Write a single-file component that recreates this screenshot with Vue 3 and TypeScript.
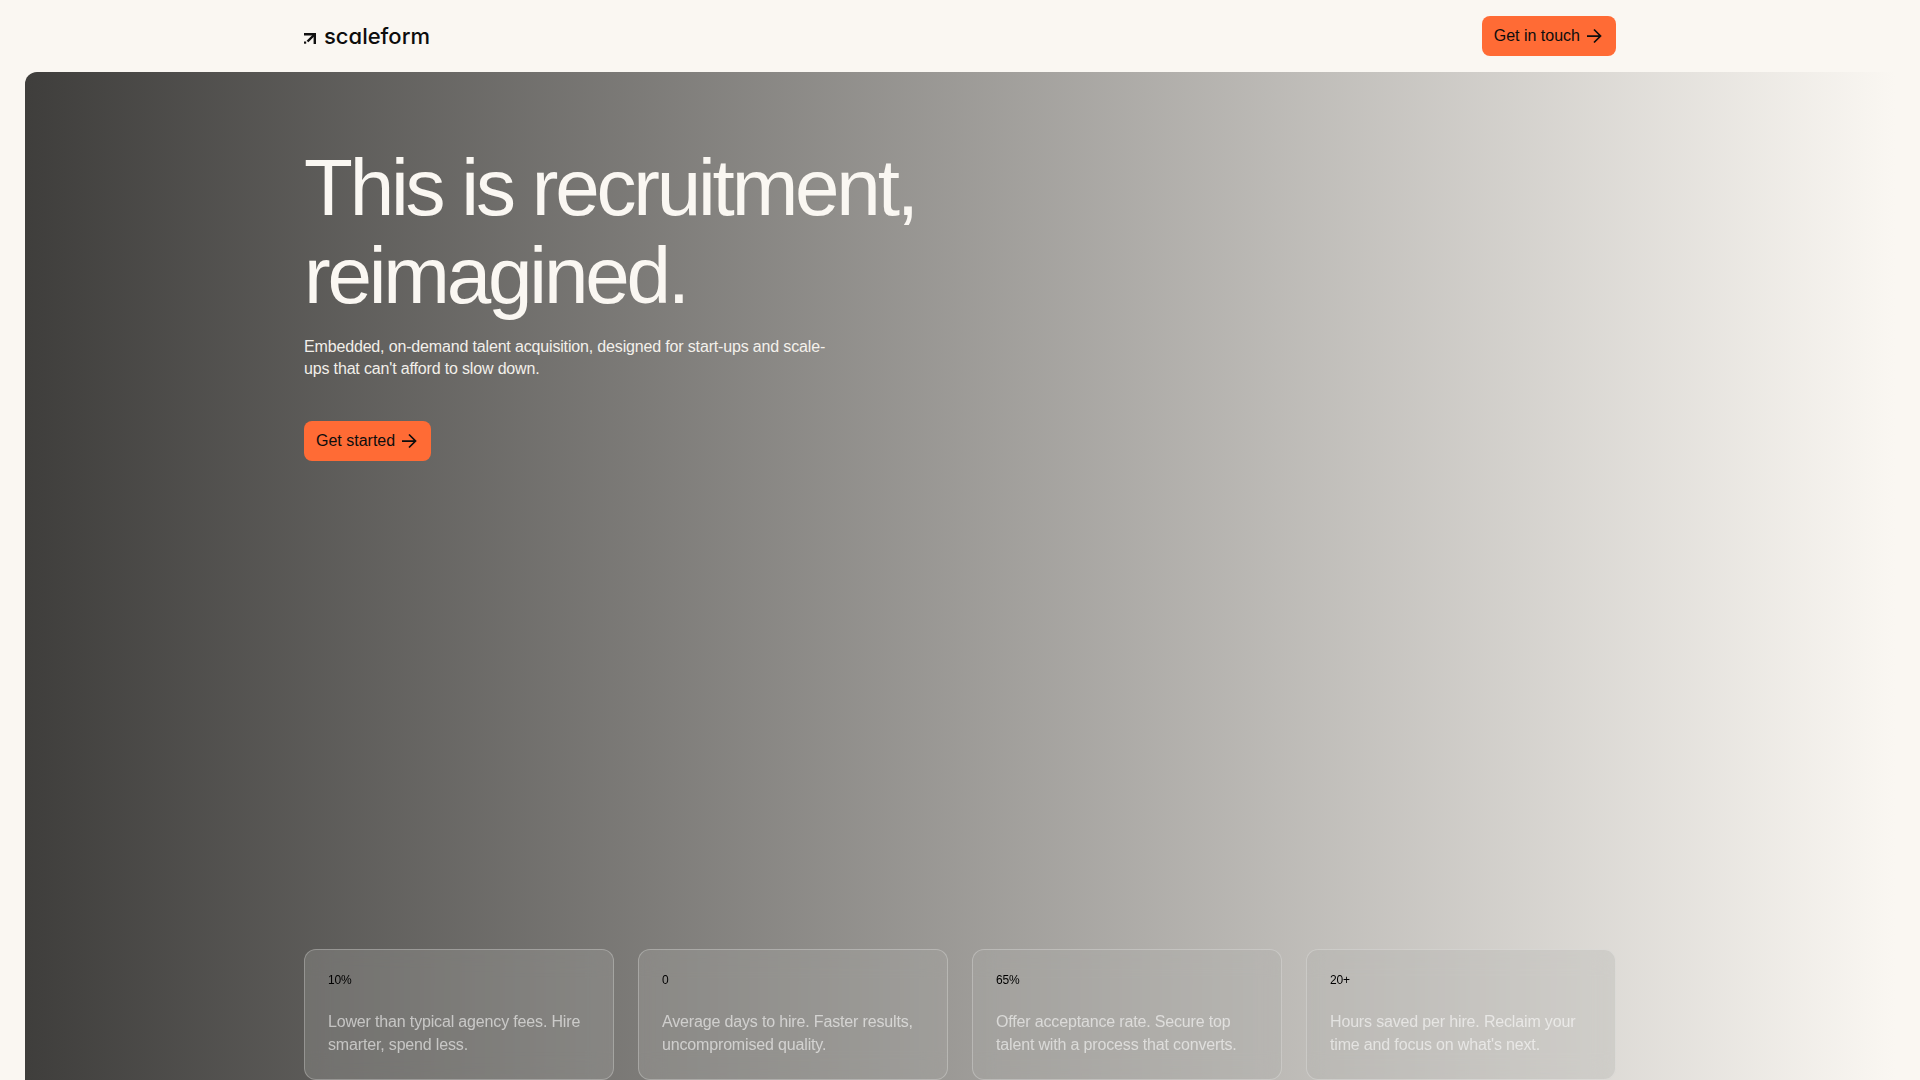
<script setup lang="ts">
interface Stat { value: string; text: string }
const stats: Stat[] = [
  { value: '10%', text: 'Lower than typical agency fees. Hire smarter, spend less.' },
  { value: '0', text: 'Average days to hire. Faster results, uncompromised quality.' },
  { value: '65%', text: 'Offer acceptance rate. Secure top talent with a process that converts.' },
  { value: '20+', text: "Hours saved per hire. Reclaim your time and focus on what's next." },
]
</script>

<template>
  <div class="page">
    <header class="header">
      <a class="logo" href="#">
        <svg class="logo-mark" width="12" height="11" viewBox="0 0 12 11" aria-hidden="true">
          <path d="M0 1.2H10.8V11" fill="none" stroke="#111" stroke-width="2.4" />
          <path d="M10.5 1.5L3.5 8.5" fill="none" stroke="#111" stroke-width="2.4" />
          <rect x="0" y="8.5" width="2.2" height="2.2" fill="#111" />
        </svg>
        <span class="logo-text">scaleform</span>
      </a>
      <a class="btn" href="#">
        Get in touch
        <svg class="arrow" width="20" height="20" viewBox="0 0 20 20" aria-hidden="true">
          <path d="M3 10H16.5M10 3.5L16.5 10L10 16.5" fill="none" stroke="currentColor" stroke-width="1.75" />
        </svg>
      </a>
    </header>
    <section class="hero">
      <div class="intro">
        <h1 class="title">This is recruitment,<br />reimagined.</h1>
        <p class="lead">Embedded, on-demand talent acquisition, designed for start-ups and scale-ups that can't afford to slow down.</p>
        <a class="btn cta" href="#">
          Get started
          <svg class="arrow" width="20" height="20" viewBox="0 0 20 20" aria-hidden="true">
            <path d="M3 10H16.5M10 3.5L16.5 10L10 16.5" fill="none" stroke="currentColor" stroke-width="1.75" />
          </svg>
        </a>
      </div>
      <div class="cards">
        <article v-for="s in stats" :key="s.value" class="card">
          <div class="value">{{ s.value }}</div>
          <p class="desc">{{ s.text }}</p>
        </article>
      </div>
    </section>
  </div>
</template>

<style scoped>
.page {
  width: 1920px;
  height: 1080px;
  overflow: hidden;
  background: #faf7f2;
  font-family: "Liberation Sans", Arial, sans-serif;
  color: #0d0d0d;
}
.header {
  height: 72px;
  padding: 0 304px;
  display: flex;
  align-items: center;
  justify-content: space-between;
}
.logo {
  display: flex;
  align-items: center;
  gap: 8px;
  color: #0d0d0d;
  text-decoration: none;
}
.logo-mark { margin-top: 5px; }
.logo-text {
  font-family: Inter, "Liberation Sans", sans-serif;
  font-feature-settings: "cv11" 1;
  font-size: 22px;
  font-weight: 500;
  letter-spacing: 0;
  line-height: 24px;
}
.btn {
  display: inline-flex;
  align-items: center;
  gap: 4px;
  height: 40px;
  padding: 0 12px;
  box-sizing: border-box;
  border-radius: 8px;
  background: #ff6b35;
  color: #0d0d0d;
  font-size: 16px;
  text-decoration: none;
}
.arrow { display: block; }
.hero {
  height: 1008px;
  margin: 0 25px;
  padding: 72px 279px 0;
  box-sizing: border-box;
  border-radius: 12px 0 0 0;
  background: linear-gradient(90deg, #3f3e3c 0%, #faf7f2 100%);
  display: flex;
  flex-direction: column;
  justify-content: space-between;
}
.intro { display: flex; flex-direction: column; align-items: flex-start; }
.title {
  margin: 0;
  font-size: 80px;
  line-height: 88px;
  font-weight: 400;
  letter-spacing: -0.04em;
  color: #faf7f2;
}
.lead {
  margin: 16px 0 0;
  width: 528px;
  font-size: 16px;
  line-height: 22.4px;
  letter-spacing: -0.01em;
  color: #faf7f2;
  opacity: 0.95;
}
.cta { margin-top: 40px; }
.cards {
  display: grid;
  grid-template-columns: repeat(4, 1fr);
  gap: 24px;
}
.card {
  padding: 24px 23px 23px;
  border: 1px solid rgba(255, 255, 255, 0.25);
  border-radius: 12px;
  background: rgba(173, 172, 168, 0.28);
  backdrop-filter: blur(12px);
}
.value {
  font-size: 12px;
  line-height: 12px;
  letter-spacing: -0.01em;
  color: #000;
}
.desc {
  margin: 25px 0 0;
  font-size: 16px;
  line-height: 22.4px;
  letter-spacing: -0.01em;
  color: rgba(255, 255, 255, 0.58);
}
</style>

<style>
html, body { background: #faf7f2; overflow: hidden; }
</style>
